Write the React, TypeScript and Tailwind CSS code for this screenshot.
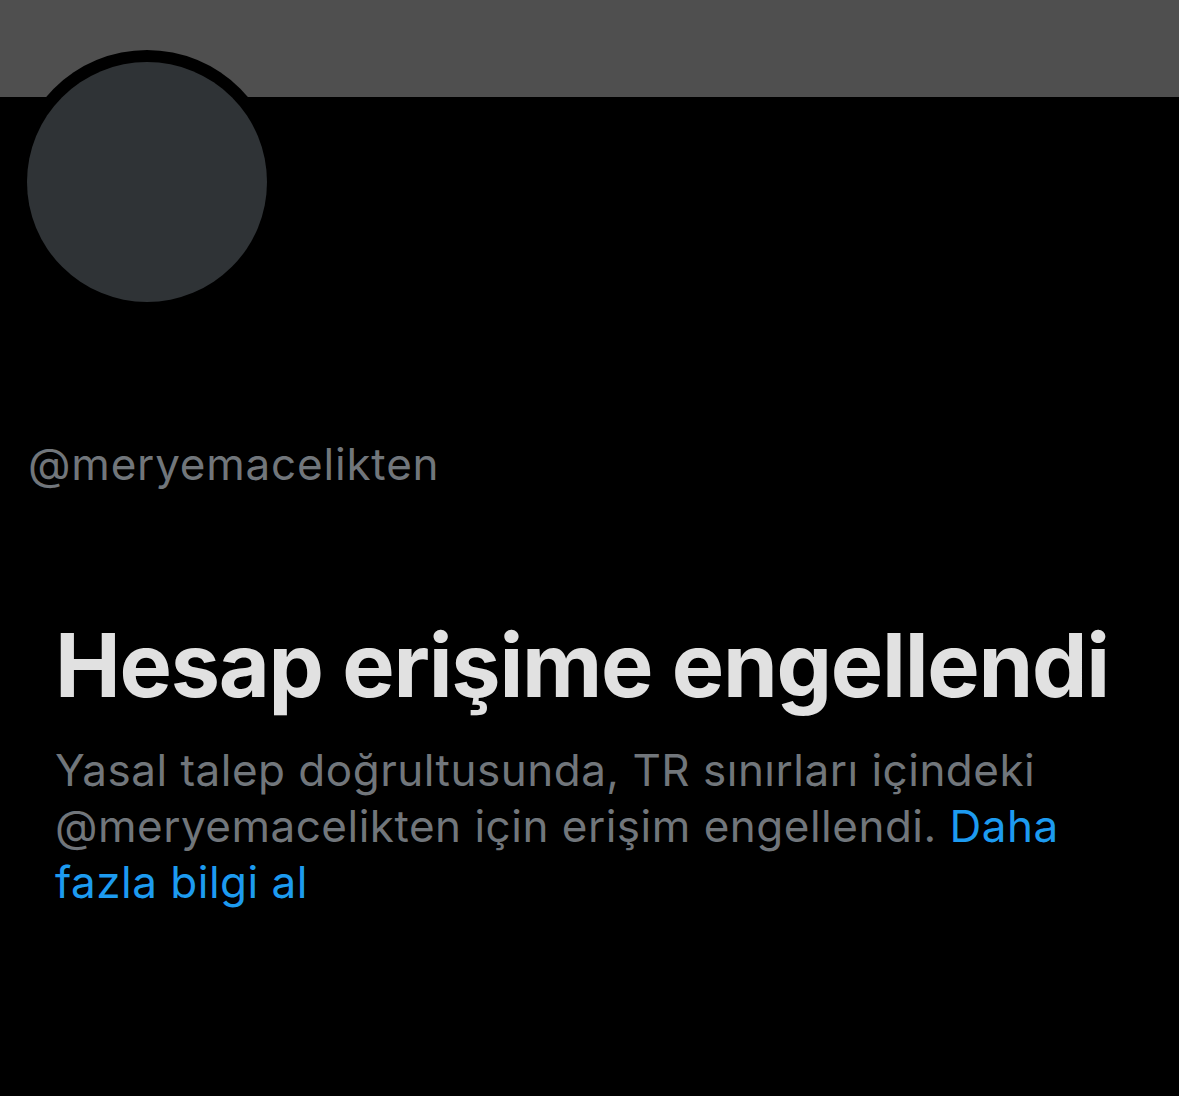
export default function App() {
  return (
    <div
      className="w-[1179px] h-[1096px] bg-black overflow-hidden"
      style={{ fontFamily: "Inter, 'Liberation Sans', sans-serif" }}
    >
      {/* Banner */}
      <div className="h-[97px] bg-[#4f4f4f]" />

      {/* Avatar */}
      <div className="-mt-[47px] ml-[15px] w-[264px] h-[264px] rounded-full bg-black p-[12px]">
        <div className="w-full h-full rounded-full bg-[#2f3336]" />
      </div>

      {/* Handle */}
      <div className="mt-[124px] pl-[28px] text-[44px] leading-[52px] tracking-[0.8px] text-[#71767b]">
        @meryemacelikten
      </div>

      {/* Notice */}
      <div className="mt-[125px] px-[55px]">
        <h1 className="text-[88px] leading-[100px] font-bold text-[#e1e1e1] tracking-[-1.25px] whitespace-nowrap">
          Hesap erişime engellendi
        </h1>
        <p className="mt-[27px] w-[1030px] text-[44px] leading-[56px] tracking-[0.5px] text-[#71767b]">
          Yasal talep doğrultusunda, TR sınırları içindeki @meryemacelikten için erişim engellendi.{" "}
          <a href="#" className="text-[#1d9bf0]">
            Daha fazla bilgi al
          </a>
        </p>
      </div>
    </div>
  );
}
